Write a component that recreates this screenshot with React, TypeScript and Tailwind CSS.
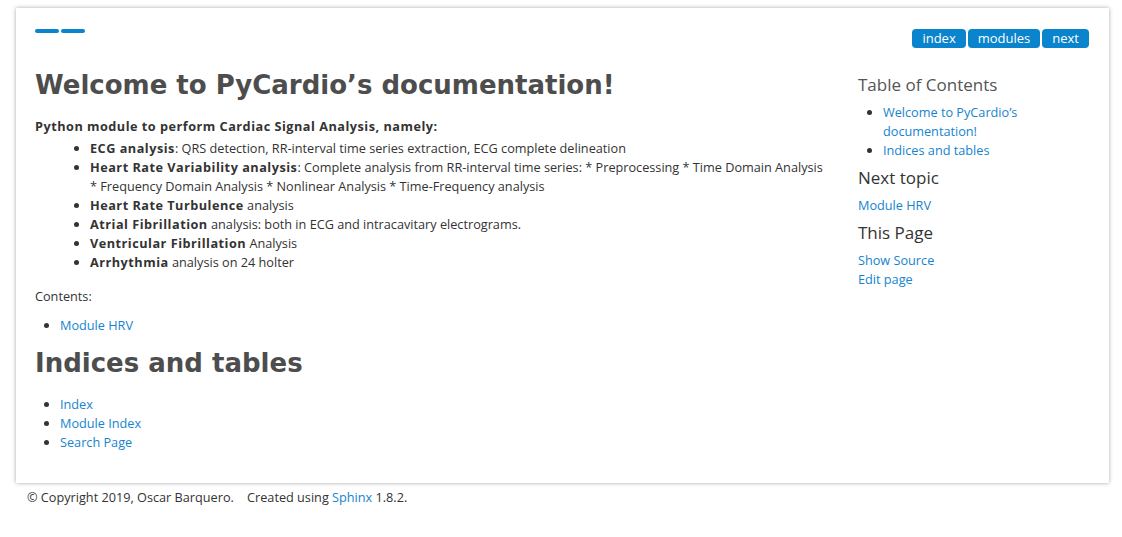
const link = "text-[#1584cf]";

function Bullet({ children }: { children: React.ReactNode }) {
    return <li className="leading-[19px]">{children}</li>;
}

function B({ children }: { children: React.ReactNode }) {
    return <b className="font-bold tracking-[0.5px]">{children}</b>;
}

export default function App() {
    return (
        <div className="min-h-[537px] bg-white text-[12.7px] text-[#333] font-['Open_Sans',sans-serif]">
            <div className="ml-[16px] mt-[8px] w-[1093px] bg-white shadow-[0_0_4px_rgba(0,0,0,0.35)] px-[19px] pt-[21px] pb-[31px]">
                {/* top bar */}
                <div className="flex items-start justify-between pr-[1px]">
                    <div className="flex gap-[2px]">
                        <span className="block w-[24px] h-[4px] rounded-full bg-[#0a84cc]" />
                        <span className="block w-[24px] h-[4px] rounded-full bg-[#0a84cc]" />
                    </div>
                    <div className="flex gap-[2px] text-[13px]">
                        <a className="h-[19px] px-[10px] rounded-[4px] bg-[#0a84cc] text-white leading-[19px]">index</a>
                        <a className="h-[19px] px-[10px] rounded-[4px] bg-[#0a84cc] text-white leading-[19px]">modules</a>
                        <a className="h-[19px] px-[10px] rounded-[4px] bg-[#0a84cc] text-white leading-[19px]">next</a>
                    </div>
                </div>

                <div className="flex">
                    {/* main body */}
                    <div className="flex-1 min-w-0 pr-[32px]">
                        <h1 className="mt-[20px] text-[26px] leading-[34px] font-bold text-[#4d4d4d] font-['DejaVu_Sans',sans-serif]">
                            Welcome to PyCardio’s documentation!
                        </h1>
                        <dl className="mt-[15px]">
                            <dt className="leading-[19px]"><B>Python module to perform Cardiac Signal Analysis, namely:</B></dt>
                            <dd className="mt-[3px]">
                                <ul className="list-disc pl-[55px]">
                                    <Bullet><B>ECG analysis</B>: QRS detection, RR-interval time series extraction, ECG complete delineation</Bullet>
                                    <Bullet><B>Heart Rate Variability analysis</B>: Complete analysis from RR-interval time series: * Preprocessing * Time Domain Analysis * Frequency Domain Analysis * Nonlinear Analysis * Time-Frequency analysis</Bullet>
                                    <Bullet><B>Heart Rate Turbulence</B> analysis</Bullet>
                                    <Bullet><B>Atrial Fibrillation</B> analysis: both in ECG and intracavitary electrograms.</Bullet>
                                    <Bullet><B>Ventricular Fibrillation</B> Analysis</Bullet>
                                    <Bullet><B>Arrhythmia</B> analysis on 24 holter</Bullet>
                                </ul>
                            </dd>
                        </dl>
                        <p className="mt-[15px] leading-[19px]">Contents:</p>
                        <ul className="mt-[10px] list-disc pl-[25px]">
                            <Bullet><a className={link}>Module HRV</a></Bullet>
                        </ul>
                        <h2 className="mt-[13px] text-[26px] leading-[30px] font-bold text-[#4d4d4d] font-['DejaVu_Sans',sans-serif]">
                            Indices and tables
                        </h2>
                        <ul className="mt-[17px] list-disc pl-[25px]">
                            <Bullet><a className={link}>Index</a></Bullet>
                            <Bullet><a className={link}>Module Index</a></Bullet>
                            <Bullet><a className={link}>Search Page</a></Bullet>
                        </ul>
                    </div>

                    {/* sidebar */}
                    <div className="w-[232px] shrink-0 pt-[25px]">
                        <h3 className="text-[17px] leading-[24px] text-[#555]">Table of Contents</h3>
                        <ul className="mt-[6px] list-disc pl-[25px]">
                            <Bullet><a className={link}>Welcome to PyCardio’s documentation!</a></Bullet>
                            <Bullet><a className={link}>Indices and tables</a></Bullet>
                        </ul>
                        <h3 className="mt-[6px] text-[17px] leading-[24px] text-[#333]">Next topic</h3>
                        <p className="mt-[6px] leading-[19px]"><a className={link}>Module HRV</a></p>
                        <h3 className="mt-[6px] text-[17px] leading-[24px] text-[#333]">This Page</h3>
                        <ul className="mt-[6px]">
                            <Bullet><a className={link}>Show Source</a></Bullet>
                            <Bullet><a className={link}>Edit page</a></Bullet>
                        </ul>
                    </div>
                </div>
            </div>

            <div className="ml-[27px] mt-[5px] leading-[19px]">
                © Copyright 2019, Oscar Barquero.&nbsp;&nbsp;&nbsp;&nbsp;Created using <a className={link}>Sphinx</a> 1.8.2.
            </div>
        </div>
    );
}
